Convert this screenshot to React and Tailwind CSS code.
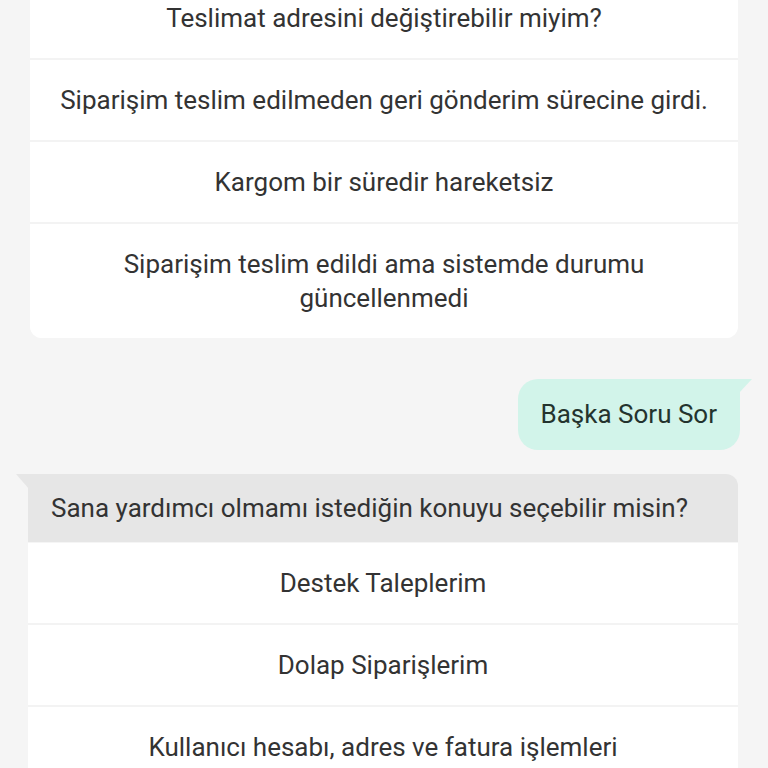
const topOptions = [
  'Teslimat adresini değiştirebilir miyim?',
  'Siparişim teslim edilmeden geri gönderim sürecine girdi.',
  'Kargom bir süredir hareketsiz',
  'Siparişim teslim edildi ama sistemde durumu güncellenmedi',
];

const botOptions = ['Destek Taleplerim', 'Dolap Siparişlerim', 'Kullanıcı hesabı, adres ve fatura işlemleri'];

function OptionRow({ label, first }) {
  return (
    <button
      className={`block w-full bg-white px-[16px] py-[23px] text-center text-[26px] leading-[34px] text-[#333333] ${
        first ? '' : 'border-t-2 border-[#f3f3f3]'
      }`}
    >
      {label}
    </button>
  );
}

export default function App() {
  return (
    <div className="h-[768px] w-[768px] overflow-hidden bg-[#f5f5f5] font-['Roboto',sans-serif]">
      <div className="mx-[30px] -mt-[22px] overflow-hidden rounded-b-[12px] bg-white">
        {topOptions.map((o, i) => (
          <OptionRow key={o} label={o} first={i === 0} />
        ))}
      </div>

      <div className="mt-[41px] flex justify-end pr-[28px]">
        <div className="relative rounded-[20px] rounded-tr-none bg-[#d2f4ea] px-[23px] py-[16px] text-[26px] leading-[39px] text-[#24332e]">
          Başka Soru Sor
          <svg className="absolute -right-[12px] top-0" width="13" height="14" viewBox="0 0 13 14">
            <path d="M0 0 H13 L0 14 Z" fill="#d2f4ea" />
          </svg>
        </div>
      </div>

      <div className="relative mt-[24px] ml-[28px] mr-[30px]">
        <svg className="absolute -left-[12px] top-0" width="13" height="15" viewBox="0 0 13 15">
          <path d="M0 0 H13 V15 Z" fill="#e6e6e6" />
        </svg>
        <div className="rounded-tr-[12px] bg-[#e6e6e6] px-[23px] py-[17px] text-[26px] leading-[34px] text-[#333333]">
          Sana yardımcı olmamı istediğin konuyu seçebilir misin?
        </div>
        <div className="mt-[1px] bg-white">
          {botOptions.map((o, i) => (
            <OptionRow key={o} label={o} first={i === 0} />
          ))}
        </div>
      </div>
    </div>
  );
}
